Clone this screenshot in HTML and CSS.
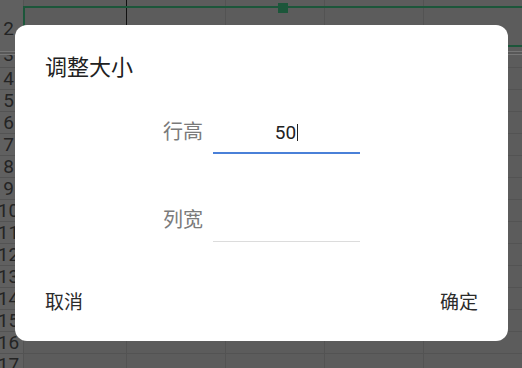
FILE: index.html
```html
<!DOCTYPE html>
<html lang="zh-CN">
<head>
    <meta charset="UTF-8">
    <meta name="viewport" content="width=device-width, initial-scale=1.0">
    <title>调整大小</title>
    <link rel="stylesheet" href="styles.css">
</head>
<body>
    <!-- Spreadsheet behind the dialog (already dimmed) -->
    <div class="sheet">
        <div class="row frozen r1"><div class="head">1</div><div class="cell col-a"></div><div class="cell"></div><div class="cell"></div><div class="cell"></div><div class="cell"></div></div>
        <div class="row frozen r2"><div class="head">2</div><div class="cell col-a"></div><div class="cell"></div><div class="cell"></div><div class="cell"></div><div class="cell"></div></div>
        <div class="pane-split"></div>
        <div class="row r3"><div class="head">3</div><div class="cell col-a"></div><div class="cell"></div><div class="cell"></div><div class="cell"></div><div class="cell"></div></div>
        <div class="row"><div class="head">4</div><div class="cell col-a"></div><div class="cell"></div><div class="cell"></div><div class="cell"></div><div class="cell"></div></div>
        <div class="row"><div class="head">5</div><div class="cell col-a"></div><div class="cell"></div><div class="cell"></div><div class="cell"></div><div class="cell"></div></div>
        <div class="row"><div class="head">6</div><div class="cell col-a"></div><div class="cell"></div><div class="cell"></div><div class="cell"></div><div class="cell"></div></div>
        <div class="row"><div class="head">7</div><div class="cell col-a"></div><div class="cell"></div><div class="cell"></div><div class="cell"></div><div class="cell"></div></div>
        <div class="row"><div class="head">8</div><div class="cell col-a"></div><div class="cell"></div><div class="cell"></div><div class="cell"></div><div class="cell"></div></div>
        <div class="row"><div class="head">9</div><div class="cell col-a"></div><div class="cell"></div><div class="cell"></div><div class="cell"></div><div class="cell"></div></div>
        <div class="row"><div class="head">10</div><div class="cell col-a"></div><div class="cell"></div><div class="cell"></div><div class="cell"></div><div class="cell"></div></div>
        <div class="row"><div class="head">11</div><div class="cell col-a"></div><div class="cell"></div><div class="cell"></div><div class="cell"></div><div class="cell"></div></div>
        <div class="row"><div class="head">12</div><div class="cell col-a"></div><div class="cell"></div><div class="cell"></div><div class="cell"></div><div class="cell"></div></div>
        <div class="row"><div class="head">13</div><div class="cell col-a"></div><div class="cell"></div><div class="cell"></div><div class="cell"></div><div class="cell"></div></div>
        <div class="row"><div class="head">14</div><div class="cell col-a"></div><div class="cell"></div><div class="cell"></div><div class="cell"></div><div class="cell"></div></div>
        <div class="row"><div class="head">15</div><div class="cell col-a"></div><div class="cell"></div><div class="cell"></div><div class="cell"></div><div class="cell"></div></div>
        <div class="row"><div class="head">16</div><div class="cell col-a"></div><div class="cell"></div><div class="cell"></div><div class="cell"></div><div class="cell"></div></div>
        <div class="row"><div class="head">17</div><div class="cell col-a"></div><div class="cell"></div><div class="cell"></div><div class="cell"></div><div class="cell"></div></div>

        <!-- Selected row outline -->
        <div class="selection"><span class="handle"></span></div>
    </div>

    <!-- Resize dialog -->
    <div class="dialog">
        <h1 class="dialog-title">调整大小</h1>
        <div class="field">
            <label class="field-label">行高</label>
            <div class="field-input active"><span>50</span><span class="caret"></span></div>
        </div>
        <div class="field">
            <label class="field-label">列宽</label>
            <div class="field-input"></div>
        </div>
        <div class="actions">
            <button class="btn">取消</button>
            <button class="btn">确定</button>
        </div>
    </div>
</body>
</html>
```

FILE: styles.css
```css
/* Page */
body {
    margin: 0;
    font-family: Roboto, "Noto Sans CJK SC", sans-serif;
    background-color: #5c5c5c;
    overflow: hidden;
}

/* Dimmed spreadsheet */
.sheet {
    position: relative;
    height: 368px;
    overflow: hidden;
    background-color: #5c5c5c;
}
.row {
    display: flex;
    height: 22px;
    border-bottom: 1px solid #535353;
    box-sizing: border-box;
}
.head {
    flex: none;
    width: 30px;
    margin-left: -6px;
    border-right: 1px solid #535353;
    box-sizing: border-box;
    text-align: center;
    font-size: 19px;
    line-height: 21px;
    color: #242424;
    background-color: #606060;
}
.cell {
    flex: none;
    width: 99px;
    border-right: 1px solid #535353;
    box-sizing: border-box;
}
.cell.col-a {
    width: 103px;
}
.frozen .col-a {
    border-right-color: #111;
}
.r1 {
    height: 7px;
    border-bottom: none;
}
.r1 .head {
    line-height: 0;
    margin-top: -7px;
}
.r2 {
    height: 44px;
    border-bottom: none;
}
.r2 .head {
    line-height: 44px;
}
.pane-split {
    height: 4px;
    border-top: 1px solid #777;
    border-bottom: 1px solid #777;
    box-sizing: border-box;
    background-color: #585858;
}
.r3 {
    height: 13px;
    overflow: hidden;
}
.r3 .head {
    line-height: 0;
}
.selection {
    position: absolute;
    top: 6px;
    left: 23px;
    width: 520px;
    height: 41px;
    border: 2px solid #1c563a;
    box-sizing: border-box;
}
.handle {
    position: absolute;
    top: -5px;
    left: 253px;
    width: 10px;
    height: 10px;
    background-color: #1c563a;
}

/* Dialog */
.dialog {
    position: absolute;
    top: 25px;
    left: 15px;
    width: 493px;
    padding: 28px 30px 26px;
    box-sizing: border-box;
    background: white;
    border-radius: 12px;
}
.dialog-title {
    margin: 0;
    font-size: 22px;
    font-weight: normal;
    line-height: 30px;
    color: #212121;
}
.field {
    display: flex;
    justify-content: center;
    align-items: center;
    gap: 10px;
    height: 40px;
    margin-top: 31px;
}
.field + .field {
    margin-top: 48px;
}
.field-label {
    width: 40px;
    margin-bottom: 5px;
    font-size: 20px;
    line-height: 24px;
    color: #7a7a7a;
}
.field-input {
    display: flex;
    justify-content: center;
    align-items: center;
    width: 147px;
    height: 40px;
    padding-bottom: 2px;
    border-bottom: 1px solid #dcdcdc;
    box-sizing: border-box;
    font-size: 19px;
    color: #222;
}
.field-input.active {
    border-bottom: 2px solid #4a80d8;
}
.caret {
    width: 1px;
    height: 17px;
    margin-left: 1px;
    background-color: #222;
}
.actions {
    display: flex;
    justify-content: space-between;
    margin-top: 49px;
}
.btn {
    padding: 0;
    border: none;
    background: none;
    font-family: inherit;
    font-size: 19px;
    line-height: 24px;
    color: #2b2b2b;
    cursor: pointer;
}
```
